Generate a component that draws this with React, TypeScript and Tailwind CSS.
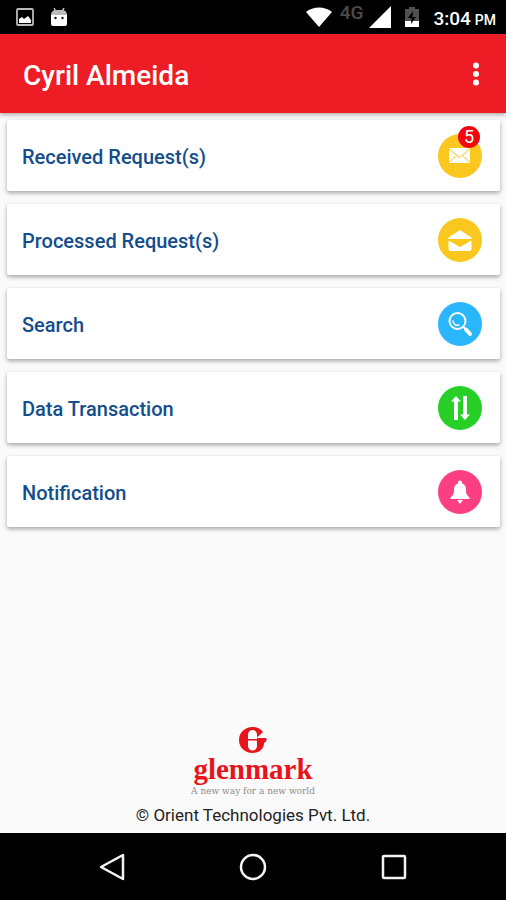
import React from "react";

type Item = { label: string; color: string; icon: React.ReactNode; badge?: number };

const items: Item[] = [
  {
    label: "Received Request(s)",
    color: "bg-[#fac71e]",
    badge: 5,
    icon: (
      <svg viewBox="0 0 44 44" className="size-11" aria-hidden="true">
        <rect x="11" y="14" width="21" height="15" fill="#fff" />
        <path d="M11 15l10.500 8.500L32 15M11 28.500l7.500-7M32 28.500l-7.500-7" fill="none" stroke="#fac71e" strokeWidth="1" />
      </svg>
    ),
  },
  {
    label: "Processed Request(s)",
    color: "bg-[#fac71e]",
    icon: (
      <svg viewBox="0 0 44 44" className="size-11" aria-hidden="true">
        <path d="M10.500 19.500l11.500-7.500 11.500 7.500v1.500h-23z" fill="#fff" />
        <path d="M10.500 22.500L22 29l11.500-6.500V31a2 2 0 0 1-2 2h-19a2 2 0 0 1-2-2z" fill="#fff" />
      </svg>
    ),
  },
  {
    label: "Search",
    color: "bg-[#29b6fb]",
    icon: (
      <svg viewBox="0 0 44 44" className="size-11" fill="none" stroke="#fff" strokeLinecap="round" aria-hidden="true">
        <circle cx="19.500" cy="19" r="8" strokeWidth="2" />
        <path d="M15 19a4.500 4.500 0 0 0 6 4" strokeWidth="1.500" />
        <path d="M25.500 25l2 2" strokeWidth="2" />
        <path d="M28 27.500l4 4.500" strokeWidth="4" />
      </svg>
    ),
  },
  {
    label: "Data Transaction",
    color: "bg-[#27cf27]",
    icon: (
      <svg viewBox="0 0 44 44" className="size-11" fill="#fff" aria-hidden="true">
        <path d="M18 10l5 5.500h-3V34h-4V15.500h-3z" />
        <path d="M25 10h4v18.500h3L27 34l-5-5.500h3z" />
      </svg>
    ),
  },
  {
    label: "Notification",
    color: "bg-[#fc3f83]",
    icon: (
      <svg viewBox="0 0 44 44" className="size-11" fill="#fff" aria-hidden="true">
        <circle cx="22" cy="12.500" r="2" />
        <path d="M22 13c4 0 6 3 6 6.500 0 4 .5 5.500 3.500 8V29h-19v-1.500c3-2.500 3.500-4 3.500-8 0-3.500 2-6.500 6-6.500z" />
        <path d="M19 30h6l-3 4z" />
      </svg>
    ),
  },
];

function StatusBar() {
  return (
    <div className="flex h-[34px] items-center bg-black pr-2.5 pl-4 text-white">
      <svg viewBox="0 0 18 18" className="size-[18px]" aria-hidden="true">
        <rect x="1" y="1" width="16" height="16" rx="1" fill="none" stroke="#b9b9b9" strokeWidth="1.800" />
        <path d="M3 15v-4l3-2 2 2 4-3 3 4v3z" fill="#fff" />
      </svg>
      <svg viewBox="0 0 18 20" className="ml-4 h-5 w-[18px]" aria-hidden="true">
        <path d="M4 1l2 3.500M14 1l-2 3.500" stroke="#ddd" strokeWidth="1.300" />
        <path d="M1 8c0-3 2-5 5-5h6c3 0 5 2 5 5z" fill="#bbb" />
        <path d="M1 8h16v9a2 2 0 0 1-2 2H3a2 2 0 0 1-2-2z" fill="#fff" />
        <circle cx="5.500" cy="11" r="1.200" fill="#111" />
        <circle cx="12.500" cy="11" r="1.200" fill="#111" />
      </svg>
      <div className="ml-auto flex items-center">
        <svg viewBox="0 0 26 20" className="h-5 w-[26px]" aria-hidden="true">
          <path d="M0 5C7-1 19-1 26 5L13 20z" fill="#fff" />
        </svg>
        <span className="ml-2 pb-2 text-[19px] leading-5 font-medium text-[#4b4b4b]">4G</span>
        <svg viewBox="0 0 22 22" className="ml-1.5 size-[22px]" aria-hidden="true">
          <path d="M22 0v22H0z" fill="#fff" />
        </svg>
        <svg viewBox="0 0 14 20" className="ml-3.5 h-5 w-3.5" aria-hidden="true">
          <path d="M4 0h6v2h4v18H0V2h4z" fill="#505050" />
          <path d="M0 14h14v6H0z" fill="#fff" />
          <path d="M8 4l-5 7h3.500L6 17l5-7H7.500z" fill="#000" />
        </svg>
        <span className="ml-3.5 flex items-baseline gap-1 pt-1 text-[19px] leading-6 font-medium">
          3:04 <span className="text-sm">PM</span>
        </span>
      </div>
    </div>
  );
}

export default function App() {
  return (
    <div className="flex min-h-screen flex-col bg-[#fafafa] font-[Roboto,sans-serif]">
      <StatusBar />
      <header className="flex h-[79px] items-center justify-between bg-[#ee1c25] pr-4 pl-[23px] shadow-[0_2px_4px_rgba(0,0,0,0.3)]">
        <h1 className="pt-1 text-[28px] leading-8 font-medium text-white">Cyril Almeida</h1>
        <button type="button" aria-label="More options" className="flex h-12 w-7 items-center justify-center">
          <svg viewBox="0 0 8 24" className="h-6 w-2" fill="#fff" aria-hidden="true">
            <circle cx="4" cy="3.500" r="3" />
            <circle cx="4" cy="12" r="3" />
            <circle cx="4" cy="20.500" r="3" />
          </svg>
        </button>
      </header>

      <main className="flex flex-col gap-[13px] pt-[7px] pr-1.5 pl-[7px]">
        {items.map((item) => (
          <button
            key={item.label}
            type="button"
            className="flex h-[71px] items-center justify-between rounded-xs bg-white pr-[18px] pl-[15px] text-left shadow-[0_2px_4px_rgba(0,0,0,0.35)]"
          >
            <span className="pt-0.5 text-[20px] leading-6 font-medium text-[#144d8c]">{item.label}</span>
            <span className={`relative rounded-full ${item.color}`}>
              {item.icon}
              {item.badge && (
                <span className="absolute -top-2 right-0.5 flex size-[22px] items-center justify-center rounded-full bg-[#f5050f] text-lg leading-5 text-white">
                  {item.badge}
                </span>
              )}
            </span>
          </button>
        ))}
      </main>

      <footer className="mt-auto flex flex-col items-center pb-1.5">
        <svg viewBox="0 0 28 26" className="h-[26px] w-7" aria-hidden="true">
          <path
            d="M24 5C21.500 2 18 0 13.500 0 6 0 0 5.500 0 13s6 13 13.500 13C20 26 25 22 25 16l2.500-2v-3H17.500z"
            fill="#e8131b"
          />
          <path d="M9 12V7.500a4.500 4.500 0 0 1 9 0V12zM9 13.500h9V19a4.500 4.500 0 0 1-9 0z" fill="#fafafa" />
        </svg>
        <p className="font-['Liberation_Serif',serif] text-[29px] leading-8 font-bold text-[#e8131b]">glenmark</p>
        <p className="font-['DejaVu_Serif',serif] text-[9px] leading-3 text-[#8d8d8d]">A new way for a new world</p>
        <p className="mt-1.5 text-[17px] leading-6 text-[#222]">© Orient Technologies Pvt. Ltd.</p>
      </footer>

      <nav className="flex h-[67px] items-center justify-center gap-[114px] bg-black">
        <button type="button" aria-label="Back">
          <svg viewBox="0 0 26 28" className="h-7 w-[26px]" fill="none" stroke="#f4f4f4" strokeWidth="2.500" strokeLinejoin="round" aria-hidden="true">
            <path d="M24 2v24L2 14z" />
          </svg>
        </button>
        <button type="button" aria-label="Home">
          <svg viewBox="0 0 28 28" className="size-7" fill="none" stroke="#f4f4f4" strokeWidth="2.500" aria-hidden="true">
            <circle cx="14" cy="14" r="12" />
          </svg>
        </button>
        <button type="button" aria-label="Recent apps">
          <svg viewBox="0 0 26 26" className="size-[26px]" fill="none" stroke="#f4f4f4" strokeWidth="2.500" aria-hidden="true">
            <rect x="2" y="2" width="22" height="22" rx="1" />
          </svg>
        </button>
      </nav>
    </div>
  );
}
